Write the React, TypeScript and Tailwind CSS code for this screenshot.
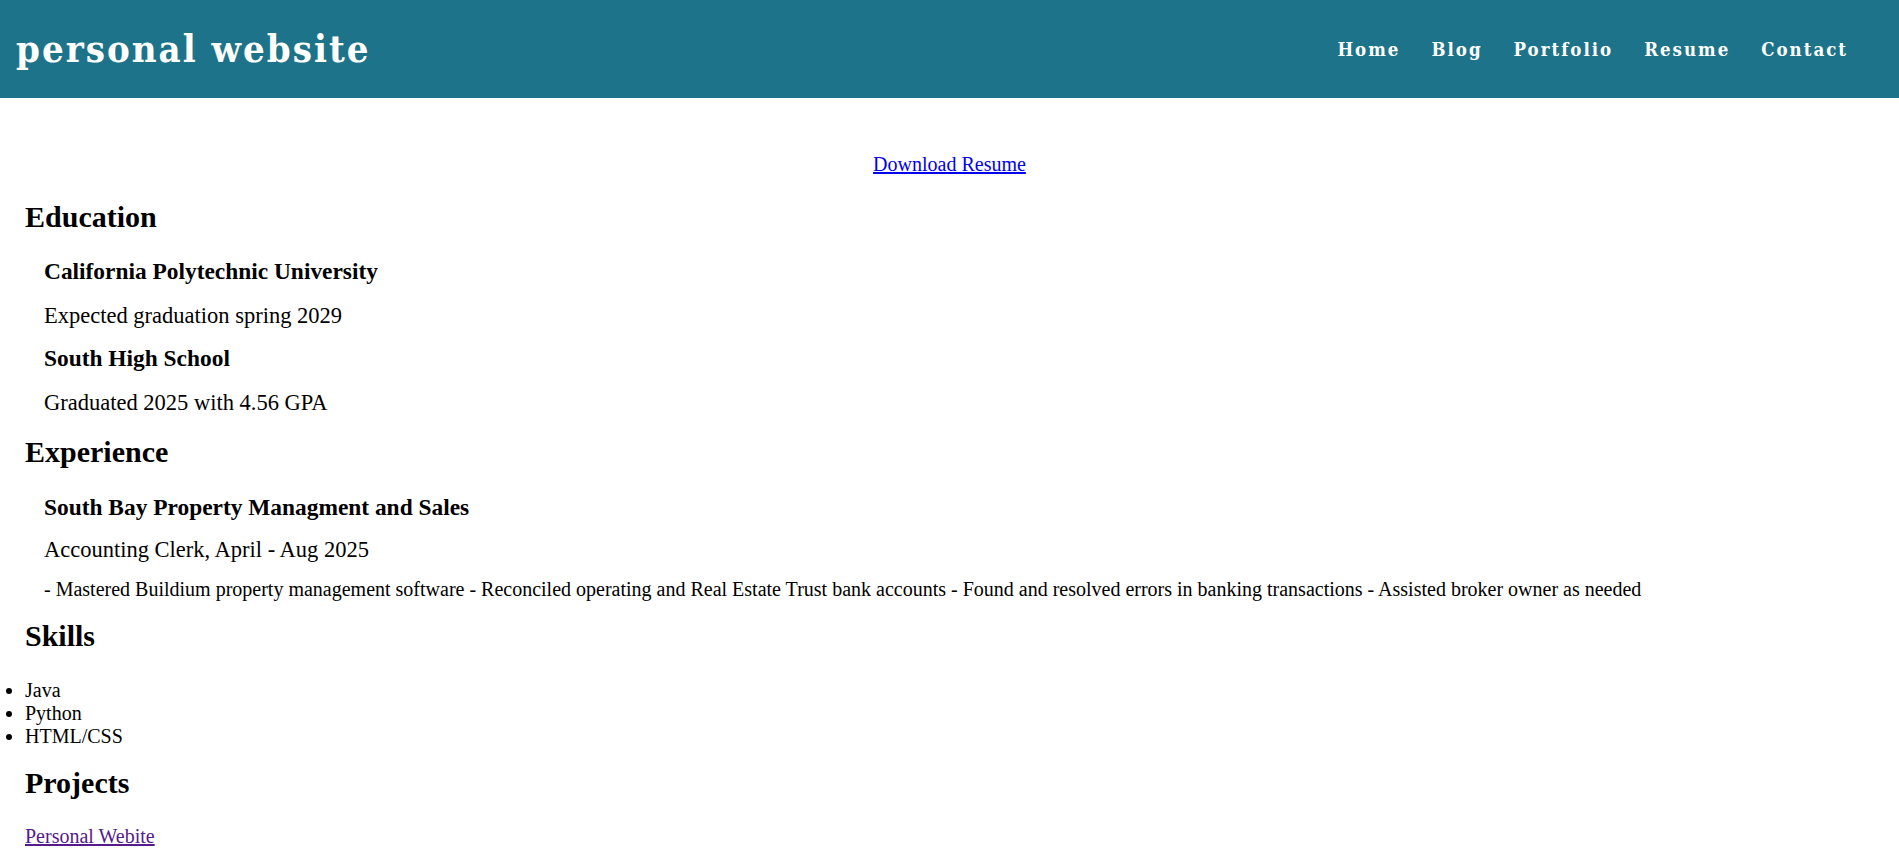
export default function App() {
  return (
    <div className="min-h-screen bg-white text-black leading-[1.15] font-['Liberation_Serif','Times_New_Roman',serif]">
      <header className="h-[98px] bg-[#1d7389] flex items-center justify-between pl-4 pr-[51px]">
        <h1 className="text-white font-bold text-[38px] tracking-[2px] font-['DejaVu_Serif_Condensed','DejaVu_Serif',serif]">
          personal website
        </h1>
        <nav className="flex gap-[31px] pt-[2px] text-white font-bold text-[18.5px] tracking-[2px] font-['DejaVu_Serif_Condensed','DejaVu_Serif',serif]">
          <a>Home</a>
          <a>Blog</a>
          <a>Portfolio</a>
          <a>Resume</a>
          <a>Contact</a>
        </nav>
      </header>

      <main className="pt-[55px] pb-6">
        <div className="text-center text-[20px]">
          <a href="#" className="text-[#0000ee] underline">Download Resume</a>
        </div>

        <section className="px-[25px]">
          <h2 className="text-[30px] font-bold mt-[24px]">Education</h2>
          <div className="pl-[19px]">
            <h3 className="text-[23.4px] font-bold mt-[23px]">California Polytechnic University</h3>
            <p className="text-[22.5px] mt-[19px]">Expected graduation spring 2029</p>
            <h3 className="text-[23.4px] font-bold mt-[16px]">South High School</h3>
            <p className="text-[22.5px] mt-[18px]">Graduated 2025 with 4.56 GPA</p>
          </div>

          <h2 className="text-[30px] font-bold mt-[19px]">Experience</h2>
          <div className="pl-[19px]">
            <h3 className="text-[23.4px] font-bold mt-[24px]">South Bay Property Managment and Sales</h3>
            <p className="text-[22.5px] mt-[17px]">Accounting Clerk, April - Aug 2025</p>
            <p className="text-[20px] mt-[15px]">
              - Mastered Buildium property management software - Reconciled operating and Real Estate Trust bank accounts - Found and resolved errors in banking transactions - Assisted broker owner as needed
            </p>
          </div>

          <h2 className="text-[30px] font-bold mt-[18px]">Skills</h2>
        </section>

        <ul className="list-disc pl-[25px] text-[20px] mt-[25px]">
          <li>Java</li>
          <li>Python</li>
          <li>HTML/CSS</li>
        </ul>

        <section className="px-[25px]">
          <h2 className="text-[30px] font-bold mt-[18px]">Projects</h2>
          <a href="#" className="block w-fit text-[20px] text-[#551a8b] underline mt-[25px]">Personal Webite</a>
        </section>
      </main>
    </div>
  );
}
